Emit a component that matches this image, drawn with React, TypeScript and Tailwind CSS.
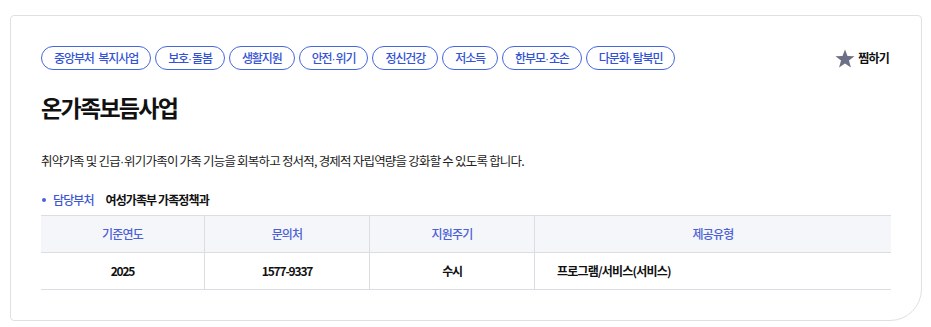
const tags = [
  "중앙부처 복지사업",
  "보호·돌봄",
  "생활지원",
  "안전·위기",
  "정신건강",
  "저소득",
  "한부모·조손",
  "다문화·탈북민",
];

const columns = [
  { head: "기준연도", value: "2025", w: "w-[164px]", left: false },
  { head: "문의처", value: "1577-9337", w: "w-[165px]", left: false },
  { head: "지원주기", value: "수시", w: "w-[165px]", left: false },
  { head: "제공유형", value: "프로그램/서비스(서비스)", w: "flex-1", left: true },
];

// Noto CJK draws the middle dot full width; the reference has a narrow one
function Dotted({ text }: { text: string }) {
  const parts = text.split("·");
  return (
    <>
      {parts.map((p, i) => (
        <span key={i}>
          {i > 0 && <span className="font-['Liberation_Sans'] tracking-normal">·</span>}
          {p}
        </span>
      ))}
    </>
  );
}

function Star() {
  return (
    <svg width="20" height="19" viewBox="0 0 24 23" className="shrink-0">
      <polygon
        points="12,0.5 15,8.6 23.5,8.8 16.8,14 19.2,22.5 12,17.5 4.8,22.5 7.2,14 0.5,8.8 9,8.6"
        fill="#6c6f86"
      />
    </svg>
  );
}

export default function App() {
  return (
    <div
      className="min-h-screen bg-white pl-[10px] pt-[15px]"
      style={{ fontFamily: '"Noto Sans CJK KR", "Noto Sans", sans-serif' }}
    >
      <div className="flex h-[306px] w-[912px] flex-col rounded-[4px] rounded-br-[32px] border border-[#e0e0e0] bg-white px-[30px] pt-[30px]">
        <div className="flex items-center justify-between">
          <div className="flex gap-[4px]">
            {tags.map((t) => (
              <span
                key={t}
                className="flex h-[24px] items-center rounded-full border border-[#4566dc] px-[12px] text-[12px] font-medium leading-none tracking-[-1.1px] text-[#3353d4] [word-spacing:3px]"
              >
                <Dotted text={t} />
              </span>
            ))}
          </div>
          <button className="mr-[2px] flex items-center gap-[3px] text-[12px] font-bold tracking-[-0.8px] text-[#111]">
            <Star />
            찜하기
          </button>
        </div>

        <h2 className="mt-[21px] text-[23px] font-bold leading-[32px] tracking-[-1.7px] text-[#111]">
          온가족보듬사업
        </h2>

        <p className="mt-[28px] text-[12.5px] leading-[20px] tracking-[-0.8px] text-[#222]">
          <Dotted text="취약가족 및 긴급·위기가족이 가족 기능을 회복하고 정서적, 경제적 자립역량을 강화할 수 있도록 합니다." />
        </p>

        <div className="mt-[18px] flex items-center text-[12px] leading-[20px] tracking-[-0.9px]">
          <span className="ml-[1px] h-[4px] w-[4px] rounded-full bg-[#4a63d8]" />
          <span className="ml-[7px] font-medium text-[#3d57d4]">담당부처</span>
          <span className="ml-[12px] font-bold text-[#111]">여성가족부 가족정책과</span>
        </div>

        <div className="mt-[5px] border-y border-[#dcdde2]">
          <div className="flex h-[37px] border-b border-[#dcdde2] bg-[#f5f6fa]">
            {columns.map((c, i) => (
              <div
                key={c.head}
                className={`${c.w} flex items-center justify-center text-[12px] font-medium tracking-[-0.8px] text-[#4b5fd6] ${
                  i < columns.length - 1 ? "border-r border-[#dcdde2]" : ""
                }`}
              >
                {c.head}
              </div>
            ))}
          </div>
          <div className="flex h-[36px]">
            {columns.map((c, i) => (
              <div
                key={c.head}
                className={`${c.w} flex items-center ${
                  c.left ? "justify-start pl-[22px] tracking-[-0.8px]" : "justify-center tracking-[-1.2px]"
                } text-[12px] font-bold text-[#111] ${
                  i < columns.length - 1 ? "border-r border-[#dcdde2]" : ""
                }`}
              >
                {c.value}
              </div>
            ))}
          </div>
        </div>
      </div>
    </div>
  );
}
